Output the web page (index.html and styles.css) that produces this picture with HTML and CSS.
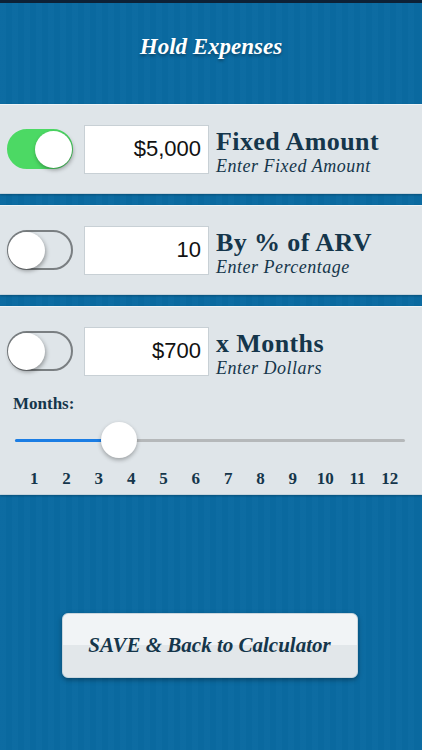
FILE: index.html
```html
<!DOCTYPE html>
<html>
<head>
  <title>Hold Expenses</title>
  <link rel="stylesheet" href="styles.css">
</head>
<body>
  <div class="status"></div>
  <header>
    <h1>Hold Expenses</h1>
  </header>
  <main>
    <section class="panel">
      <div class="row">
        <div class="toggle on"><span class="knob"></span></div>
        <div class="amount">$5,000</div>
        <div class="label">
          <h2>Fixed Amount</h2>
          <p>Enter Fixed Amount</p>
        </div>
      </div>
    </section>
    <section class="panel">
      <div class="row">
        <div class="toggle"><span class="knob"></span></div>
        <div class="amount">10</div>
        <div class="label">
          <h2>By % of ARV</h2>
          <p>Enter Percentage</p>
        </div>
      </div>
    </section>
    <section class="panel panel-tall">
      <div class="row">
        <div class="toggle"><span class="knob"></span></div>
        <div class="amount">$700</div>
        <div class="label">
          <h2>x Months</h2>
          <p>Enter Dollars</p>
        </div>
      </div>
      <div class="months-label">Months:</div>
      <div class="slider">
        <div class="track">
          <div class="fill" style="width: 104px"></div>
        </div>
        <span class="thumb" style="left: 86px"></span>
      </div>
      <div class="ticks">
        <span>1</span><span>2</span><span>3</span><span>4</span><span>5</span><span>6</span>
        <span>7</span><span>8</span><span>9</span><span>10</span><span>11</span><span>12</span>
      </div>
    </section>
  </main>
  <footer>
    <button class="save">SAVE &amp; Back to Calculator</button>
  </footer>
</body>
</html>
```

FILE: styles.css
```css
html, body {
  margin: 0;
  height: 100%;
}
body {
  width: 422px;
  height: 750px;
  overflow: hidden;
  font-family: "Liberation Serif", "DejaVu Serif", serif;
  color: #15364b;
  background-color: #0a6aa1;
  background-image: repeating-linear-gradient(90deg, rgba(255,255,255,0.012) 0 6px, rgba(0,0,0,0.012) 6px 12px);
}
.status {
  height: 3px;
  background: #0d2136;
}
header {
  height: 101px;
  display: flex;
  align-items: center;
  justify-content: center;
}
header h1 {
  margin: 0 0 14px;
  font-size: 23px;
  font-style: italic;
  font-weight: bold;
  color: #fff;
  text-shadow: 0 2px 3px rgba(0,0,0,0.35);
}
main {
  display: flex;
  flex-direction: column;
  gap: 11px;
}
.panel {
  height: 90px;
  background: #dfe5e9;
  border-top: 1px solid #eef3f6;
  border-bottom: 1px solid #c5d3dc;
  box-sizing: border-box;
  box-shadow: 0 1px 2px rgba(0,0,0,0.25);
}
.panel-tall {
  height: 189px;
}
.row {
  height: 88px;
  display: flex;
  align-items: center;
  padding-left: 7px;
}
.toggle {
  width: 66px;
  height: 40px;
  border-radius: 20px;
  box-sizing: border-box;
  border: 2px solid #7a7f82;
  background: #dfe5e9;
  display: flex;
  align-items: center;
}
.toggle .knob {
  width: 37px;
  height: 37px;
  border-radius: 50%;
  background: #fff;
  box-shadow: 1px 2px 4px rgba(0,0,0,0.35);
  margin-left: -1px;
}
.toggle.on {
  border-color: #4cd964;
  background: #4cd964;
  justify-content: flex-end;
}
.toggle.on .knob {
  margin-left: 0;
  margin-right: -1px;
}
.amount {
  margin-left: 11px;
  width: 125px;
  height: 49px;
  box-sizing: border-box;
  background: #fff;
  border: 1px solid #c8d0d5;
  font-family: "Liberation Sans", Arial, sans-serif;
  font-size: 22px;
  color: #111;
  display: flex;
  align-items: center;
  justify-content: flex-end;
  padding-right: 7px;
}
.label {
  align-self: flex-start;
  margin: 22px 0 0 7px;
}
.label h2 {
  margin: 0;
  font-size: 26px;
  line-height: 29px;
  letter-spacing: 0.4px;
  font-weight: bold;
}
.label p {
  margin: 0;
  font-size: 18px;
  line-height: 20px;
  letter-spacing: 0.5px;
  font-style: italic;
}
.months-label {
  margin: 0 0 0 13px;
  font-size: 17px;
  font-weight: bold;
  line-height: 18px;
}
.slider {
  position: relative;
  height: 36px;
  margin: 9px 17px 0 15px;
  display: flex;
  align-items: center;
}
.track {
  flex: 1;
  height: 3px;
  border-radius: 2px;
  background: #b5b8ba;
}
.fill {
  height: 3px;
  border-radius: 2px;
  background: #1b7de4;
}
.thumb {
  position: absolute;
  top: 0;
  width: 36px;
  height: 36px;
  border-radius: 50%;
  background: #fff;
  box-shadow: 0 2px 4px rgba(0,0,0,0.3);
}
.ticks {
  display: grid;
  grid-template-columns: repeat(12, 1fr);
  padding: 12px 16px 0 18px;
  font-size: 17px;
  font-weight: bold;
  text-align: center;
  line-height: 18px;
}
footer {
  display: flex;
  justify-content: center;
  padding-top: 118px;
}
.save {
  width: 296px;
  height: 65px;
  border: 1px solid #c9d6de;
  border-radius: 6px;
  background: linear-gradient(#f1f4f6 0 50%, #e2e7ea 50% 100%);
  box-shadow: 0 2px 5px rgba(0,0,0,0.35);
  font-family: "Liberation Serif", "DejaVu Serif", serif;
  font-size: 21px;
  font-weight: bold;
  font-style: italic;
  color: #15364b;
  margin-left: -3px;
}
```
